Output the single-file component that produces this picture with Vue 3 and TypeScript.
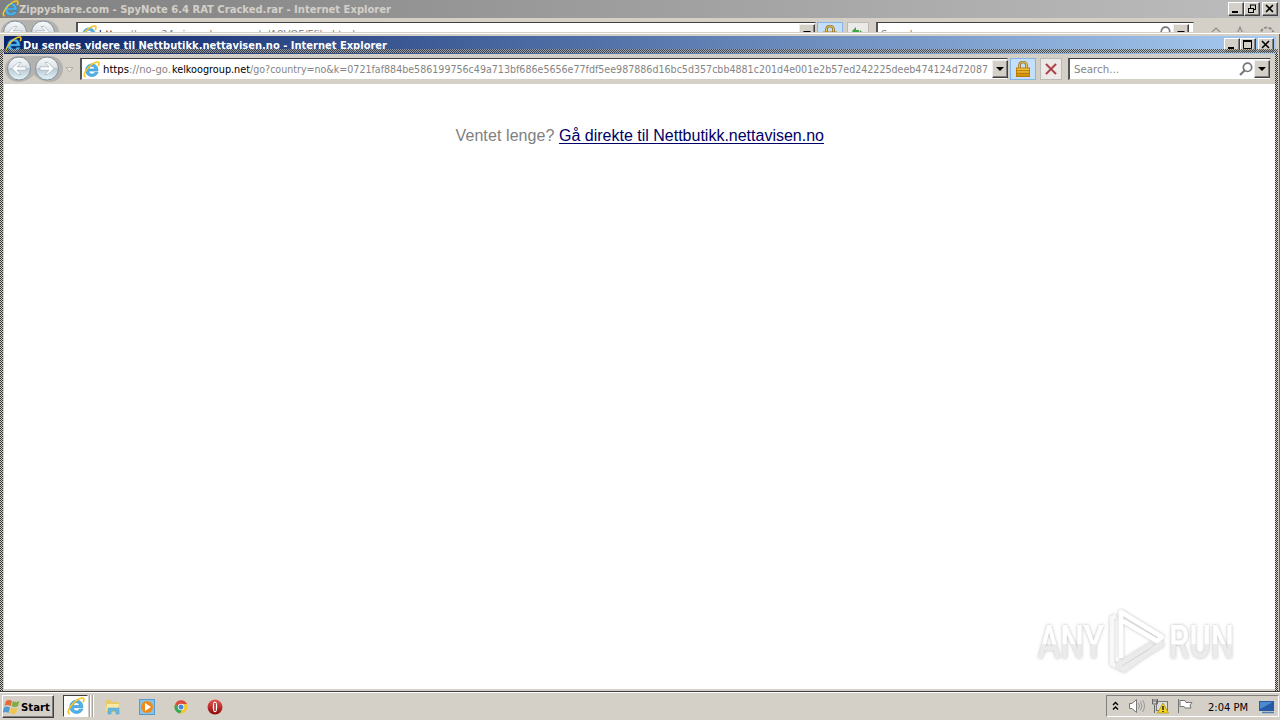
<script setup lang="ts">
const start = '://no-go.'
const path = '/go?country=no&k=0721faf884be586199756c49a713bf686e5656e77fdf5ee987886d16bc5d357cbb4881c201d4e001e2b57ed242225deeb474124d72087'
</script>

<template>
  <div class="desktop">
    <svg class="defs" width="0" height="0">
      <defs>
        <linearGradient id="round" x1="0" y1="0" x2="0" y2="1">
          <stop offset="0" stop-color="#f8fafb" /><stop offset=".48" stop-color="#dce2e7" />
          <stop offset=".5" stop-color="#b9c7d1" /><stop offset="1" stop-color="#e3f6fc" />
        </linearGradient>
        <linearGradient id="gold" x1="0" y1="0" x2="0" y2="1">
          <stop offset="0" stop-color="#f8cf50" /><stop offset="1" stop-color="#c98400" />
        </linearGradient>
        <linearGradient id="red" x1="0" y1="0" x2="0" y2="1">
          <stop offset="0" stop-color="#e55c55" /><stop offset="1" stop-color="#8d0505" />
        </linearGradient>
        <symbol id="ie" viewBox="0 0 16 16">
          <path d="M14.200 10.800C13 13.200 11 14.600 8.500 14.600 4.900 14.600 2.500 12 2.500 8.700S5 2.800 8.500 2.800s5.800 2.500 5.600 6.700H5.500c.1 1.700 1.300 2.800 3 2.800 1.200 0 2-.5 2.500-1.500zM5.600 7.500h5.500C11 6 9.900 5 8.400 5S5.800 6 5.600 7.500z" fill="#4fb4ec" stroke="#2480c0" stroke-width=".5" />
          <path d="M2.500 15C-.5 14.500 1.800 9 6.500 4.700 10.500 1 14.700-.2 15 2c.1.900-.2 1.900-.7 2.800" fill="none" stroke="#f5c526" stroke-width="1.500" />
        </symbol>
        <symbol id="nav" viewBox="0 0 58 28">
          <path d="M13 1h32a13 13 0 0 1 0 26q-9 0-16-7-7 7-16 7A13 13 0 0 1 13 1z" fill="#b3b2af" />
          <circle cx="14" cy="13.500" r="11.500" fill="url(#round)" stroke="#84909a" />
          <circle cx="42" cy="13.500" r="11.500" fill="url(#round)" stroke="#84909a" />
          <path d="M7 13.500l6-6h3l-4 4.300h9v3.400h-9l4 4.300h-3zM49 13.500l-6-6h-3l4 4.300h-9v3.400h9l-4 4.300h3z" fill="#fff" stroke="#9fadb8" stroke-width=".7" />
        </symbol>
        <symbol id="lock" viewBox="0 0 14 16">
          <path d="M3.500 8V4.500a3.500 3.500 0 0 1 7 0V8" fill="none" stroke="#896b20" stroke-width="2.600" />
          <path d="M3.500 8V4.500a3.500 3.500 0 0 1 7 0V8" fill="none" stroke="#efca63" stroke-width="1.100" />
          <rect x=".5" y="7" width="13" height="8.500" fill="url(#gold)" stroke="#bb7b05" />
          <path d="M1 9.500h12M1 12.500h12" stroke="#ad7500" stroke-width=".8" />
        </symbol>
        <symbol id="lens" viewBox="0 0 14 14">
          <circle cx="8.500" cy="5.300" r="4.200" fill="none" stroke="#77777b" stroke-width="1.700" />
          <path d="M5.500 8.500L1 13" stroke="#77777b" stroke-width="2.200" />
        </symbol>
      </defs>
    </svg>

    <section class="back">
      <header class="title gray">
        <svg class="ico" width="17" height="17"><use href="#ie" /></svg>
        <svg class="cap" width="400" height="17"><text x="0" y="13" textLength="372" lengthAdjust="spacingAndGlyphs">Zippyshare.com - SpyNote 6.4 RAT Cracked.rar - Internet Explorer</text></svg>
        <div class="wins">
          <i class="btn"><svg width="14" height="12"><path d="M3 9h6" stroke="#000" stroke-width="2" /></svg></i>
          <i class="btn"><svg width="14" height="12"><path d="M5 2h6M5.500 2v3M10.500 2v5M8 6.500h3M3 5.500h6M3.500 5v5M8.500 5v5M3 9.500h6" stroke="#000" fill="none" /></svg></i>
          <i class="btn gap"><svg width="14" height="12"><path d="M3 2l7 7M10 2L3 9" stroke="#000" stroke-width="1.600" /></svg></i>
        </div>
      </header>
      <div class="backbar">
        <svg class="bnav" width="58" height="28"><use href="#nav" /></svg>
        <div class="field baddr">
          <svg class="ico" width="17" height="17"><use href="#ie" /></svg>
          <svg class="faint" width="270" height="20"><text x="2" y="15" class="dark" textLength="26">https</text><text x="29" y="15" textLength="229" lengthAdjust="spacingAndGlyphs">://www24.zippyshare.com/v/A8VOF/Ffile.html</text></svg>
          <i class="drop"><b></b></i>
        </div>
        <i class="blue blk"><svg width="14" height="16"><use href="#lock" /></svg></i>
        <i class="sq"><svg width="16" height="14"><path d="M2 5l4-4v3h3v3H6v3zM14 8l-4-4-1 8z" fill="#42a447" /></svg></i>
        <div class="field bsearch">
          <svg class="faint" width="60" height="20"><text x="3" y="15" textLength="45">Search...</text></svg>
          <svg class="blens" width="14" height="14"><use href="#lens" /></svg><i class="drop"><b></b></i>
        </div>
        <svg class="tools" width="68" height="16" fill="none" stroke="#8d8d8d" stroke-width="1.200"><path d="M1 8l6-6 6 6v5H3V7M31 1l2 5 5 1-4 3 1 5-4-3-4 3 1-5-4-3 5-1z" /><circle cx="58" cy="8" r="6.500" stroke-dasharray="3 1.500" stroke-width="2" /></svg>
      </div>
    </section>

    <section class="front">
      <header class="title navy">
        <svg class="ico" width="17" height="17"><use href="#ie" /></svg>
        <svg class="cap" width="400" height="17"><text x="0" y="13" textLength="364" lengthAdjust="spacingAndGlyphs">Du sendes videre til Nettbutikk.nettavisen.no - Internet Explorer</text></svg>
        <div class="wins">
          <i class="btn"><svg width="14" height="12"><path d="M3 9h6" stroke="#000" stroke-width="2" /></svg></i>
          <i class="btn"><svg width="14" height="12"><path d="M2.500 2v7.500h8V2" fill="none" stroke="#000" /><path d="M2 2h9" stroke="#000" stroke-width="2" /></svg></i>
          <i class="btn gap"><svg width="14" height="12"><path d="M3 2l7 7M10 2L3 9" stroke="#000" stroke-width="1.600" /></svg></i>
        </div>
      </header>
      <nav class="bar">
        <svg class="fnav" width="58" height="28"><use href="#nav" /></svg>
        <svg class="tri" width="9" height="6"><path d="M1 .5h7L4.500 5z" fill="#e7e4de" stroke="#b1aea8" /></svg>
        <div class="field addr">
          <svg class="ico" width="17" height="17"><use href="#ie" /></svg>
          <svg class="url" width="892" height="18">
            <text x="3" y="13" textLength="26" lengthAdjust="spacingAndGlyphs" class="dark">https</text>
            <text x="29" y="13" textLength="42" lengthAdjust="spacingAndGlyphs">{{ start }}</text>
            <text x="72" y="13" textLength="78" lengthAdjust="spacingAndGlyphs" class="dark">kelkoogroup.net</text>
            <text x="150" y="13" textLength="738" lengthAdjust="spacingAndGlyphs">{{ path }}</text>
          </svg>
          <i class="drop"><b></b></i>
        </div>
        <i class="blue"><svg width="14" height="16"><use href="#lock" /></svg></i>
        <i class="sq"><svg width="14" height="14"><path d="M2 2l10 10M12 2L2 12" stroke="#c2777a" stroke-width="2.400" /><path d="M2 2l10 10M12 2L2 12" stroke="#a83a40" stroke-width="1.100" /></svg></i>
        <div class="field search">
          <svg class="url" width="60" height="18"><text x="4" y="13" textLength="45" lengthAdjust="spacingAndGlyphs">Search...</text></svg>
          <svg class="flens" width="14" height="14"><use href="#lens" /></svg><i class="drop"><b></b></i>
        </div>
      </nav>
      <main class="page">
        <svg class="msg" width="370" height="24"><text x="0.500" y="17" fill="#808080" textLength="99">Ventet lenge?</text><text x="104" y="17" fill="#000066" textLength="265">Gå direkte til Nettbutikk.nettavisen.no</text><path d="M104 19.500h265" stroke="#000066" /></svg>
        <svg class="mark" width="210" height="74" viewBox="0 0 210 74">
          <defs>
            <filter id="soft" x="-10%" y="-10%" width="120%" height="130%"><feDropShadow dx="0" dy="0" stdDeviation="1.700" flood-color="#666" flood-opacity=".5" /></filter>
            <linearGradient id="half" x1="0" y1="12" x2="0" y2="56" gradientUnits="userSpaceOnUse"><stop offset="0" stop-color="#fff" /><stop offset=".54" stop-color="#fff" /><stop offset=".56" stop-color="#ebebeb" /><stop offset="1" stop-color="#ebebeb" /></linearGradient>
          </defs>
          <g filter="url(#soft)">
            <g fill="url(#half)" class="logo"><text x="8" y="50" textLength="66" lengthAdjust="spacingAndGlyphs">ANY</text><text x="139" y="50" textLength="65" lengthAdjust="spacingAndGlyphs">RUN</text></g>
            <g fill="none" stroke-width="4.500" stroke-linejoin="round"><path d="M86 8l-4 2v46l4 2" stroke="#f8f8f8" /><path d="M133 36l-41 25-5-3 35-22M133 34L94 62l-5-3" stroke="#ebebeb" /><path d="M91 50V4l41 25-5 4-34-20" stroke="#fff" /></g>
          </g>
        </svg>
      </main>
      <i class="dither top"></i><i class="dither left"></i><i class="dither right"></i>
    </section>

    <footer class="taskbar">
      <div class="start">
        <svg width="18" height="18" viewBox="0 0 18 18"><path d="M3 3q3-2 6 0L7.500 8q-3-2-6 0z" fill="#e56835" /><path d="M10 3q3 2 6.500 0L15 8q-3 2-6.500 0z" fill="#80ad43" /><path d="M1 9.500q3-2 6 0L5.500 15q-3-2-6 0z" fill="#539bcc" /><path d="M8 9.500q3 2 6.500 0L13 15q-3 2-6.500 0z" fill="#edc64b" /></svg>
        <svg class="st" width="31" height="16"><text x="0" y="12" textLength="29" lengthAdjust="spacingAndGlyphs">Start</text></svg>
      </div>
      <div class="active"><svg width="18" height="18"><use href="#ie" /></svg></div><i class="stack"></i><i class="stack"></i>
      <div class="quick">
        <svg width="16" height="16"><path d="M1 3V1h5l1 2h7v10H1z" fill="#e9ca68" /><path d="M2 5h12l-1 7H1z" fill="#f8e9a6" /><path d="M3 15V9h11v6h-3v-3H6v3z" fill="#69b8dc" stroke="#4d9fc7" stroke-width=".5" /></svg>
        <svg width="16" height="16"><rect x=".5" y=".5" width="15" height="15" fill="#8ac3e9" stroke="#579bcc" /><circle cx="8" cy="8" r="6" fill="#ef8b18" /><path d="M6 4l6 4-6 4z" fill="#fff" /></svg>
        <svg width="16" height="16" viewBox="0 0 16 16"><circle cx="8" cy="8" r="6.500" fill="#f4c72f" /><path d="M2.400 4.700A6.500 6.500 0 0 1 14 5H8L5 9z" fill="#dc493d" /><path d="M2.400 4.700L6 10.500l3 .5-2 3.500A6.500 6.500 0 0 1 2.400 4.700z" fill="#37a85b" /><circle cx="8" cy="8" r="3.200" fill="#fff" /><circle cx="8" cy="8" r="2.500" fill="#4686da" /></svg>
        <svg width="16" height="16"><circle cx="8" cy="8" r="7.500" fill="url(#red)" /><ellipse cx="8" cy="8" rx="2.200" ry="5.300" fill="#fff" /><path d="M8 4v8" stroke="#a51a1a" stroke-width="1.500" /></svg>
      </div>
      <div class="tray">
        <svg class="chev" width="8" height="10" fill="none" stroke="#000" stroke-width="1.400"><path d="M1 4l2.500-2.500L6 4M1 8.500L3.500 6 6 8.500" /></svg>
        <svg class="sound" width="18" height="16" fill="none"><path d="M1.500 5.500H4L8.500 1.500v13L4 10.500H1.500z" fill="#fff" stroke="#777" /><path d="M10.500 5q2 3 0 6M12.500 3.500q3 4.500 0 9M14.500 2q4 6 0 12" stroke="#999" /></svg>
        <svg class="net" width="18" height="16"><rect x="4.500" y="3.500" width="11" height="9" fill="#ddd" stroke="#777" /><path d="M2.500 15V7M.5 1v5h5V1M2 1v3M4 1v3" fill="none" stroke="#666" /><path d="M11 5l5.500 10h-11z" fill="#f6d51f" stroke="#ad9000" stroke-width=".7" /><path d="M11 8v4M11 13v1" stroke="#222" stroke-width="1.500" /></svg>
        <svg class="flag" width="17" height="16"><path d="M1.500 1v14M3 2.500h5l1 2h6l-2 2.500 1 3H8l-1-1.500H3z" fill="#fff" stroke="#777" /></svg>
        <svg class="clock" width="42" height="16"><text x="0" y="13" textLength="40" lengthAdjust="spacingAndGlyphs">2:04 PM</text></svg>
        <svg class="desk" width="16" height="15"><path d="M0 2h15v10H0z" fill="#235ba8" /><path d="M1 3h13L1 10z" fill="#4e89ce" /><path d="M3 13.500h12" stroke="#527db1" stroke-width="1.500" /></svg>
      </div>
    </footer>
  </div>
</template>

<style>
html, body { margin: 0; overflow: hidden; }
</style>
<style scoped>
* { box-sizing: border-box; }
svg, i { display: block; flex: none; }
.defs { position: absolute; }
.desktop { width: 1280px; height: 720px; overflow: hidden; position: relative; background: #d4d0c8; display: flex; flex-direction: column; font-family: "DejaVu Sans Condensed", "DejaVu Sans", sans-serif; }
.back { height: 32px; overflow: hidden; }
.title { display: flex; align-items: flex-start; }
.gray { height: 18px; background: linear-gradient(90deg, #808080, #bdbdbd); padding-left: 2px; }
.cap { margin-left: 1px; font: bold 11px "DejaVu Sans Condensed", sans-serif; fill: #d4d0c8; }
.gray .cap { margin-left: 0; }
.wins { margin-left: auto; display: flex; padding: 2px 2px 0 0; }
.btn { width: 16px; height: 14px; background: #d4d0c8; border: 1px solid; border-color: #fff #404040 #404040 #fff; box-shadow: inset -1px -1px #808080; }
.gap { margin-left: 2px; }
.backbar { height: 32px; padding-top: 4px; display: flex; align-items: flex-start; }
.bnav { margin: -3px 0 0 1px; }
.field { background: #fff; border: 1px solid #777; border-top: 1px solid #404040; border-left: 2px solid #555; border-right-color: #d4d0c8; border-bottom-color: #d4d0c8; height: 22px; display: flex; align-items: center; }
.baddr { width: 740px; margin-left: 17px; }
.baddr .ico { margin-left: 2px; }
.faint, .url { font-size: 11px; fill: #858585; }
.dark { fill: #000; }
.drop { width: 16px; height: 18px; margin-left: auto; background: #d4d0c8; border: 1px solid; border-color: #eee #404040 #404040 #eee; box-shadow: inset -1px -1px #808080; display: flex; justify-content: center; align-items: center; }
.drop b { border: 4px solid transparent; border-top-color: #000; border-bottom: 0; }
.blue, .sq { width: 26px; height: 22px; background: #c4dff9; border: 1px solid #86b5e5; display: flex; justify-content: center; align-items: center; }
.sq { width: 22px; background: #eceae6; border-color: #bdbab5; }
.blk { margin-left: 1px; }
.backbar .sq { margin-left: 4px; }
.bsearch { width: 318px; margin-left: 7px; }
.blens { margin-left: auto; margin-right: 2px; }
.bsearch .drop { margin-left: 0; margin-right: 4px; }
.tools { margin: 4px 0 0 15px; }
.front { position: relative; height: 660px; background: #d4d0c8; border-top: 1px solid #d4d0c8; box-shadow: inset 0 1px #fff, inset -1px 0 #606060; padding-top: 3px; border-bottom: 1px solid #404040; }
.navy { height: 18px; margin: 0 4px; background: linear-gradient(90deg, #0a246a, #a6caf0); padding-left: 1px; }
.navy .cap { fill: #fff; }
.navy .wins { padding-right: 2px; }
.bar { height: 30px; padding-top: 4px; display: flex; }
.fnav { margin: -3px 0 0 5px; }
.tri { margin: 9px 0 0 2px; }
.addr { width: 928px; margin-left: 6px; }
.addr .ico { margin-left: 1px; }
.bar .blue { margin-left: 2px; }
.bar .sq { margin-left: 4px; }
.search { width: 203px; margin-left: 6px; }
.flens { margin-left: auto; margin-right: 1px; }
.search .drop { margin-left: 0; }
.page { height: 605px; margin: 0 5px 0 4px; background: #fff; position: relative; padding-top: 40px; }
.msg { margin: 0 auto; font: 16px "Liberation Sans", sans-serif; }
.mark { position: absolute; left: 1026px; top: 524px; }
.logo { font: 500 46px "Roboto", sans-serif; }
.dither { position: absolute; background: repeating-conic-gradient(#303030 0 25%, #d4d0c8 0 50%) 0 0 / 2px 2px; }
.top { left: 0; right: 2px; top: 16px; height: 4px; background: repeating-conic-gradient(rgba(64, 64, 64, .85) 0 25%, rgba(190, 190, 180, .65) 0 50%) 0 0 / 2px 2px; }
.left { left: 0; top: 20px; bottom: 0; width: 3px; }
.right { right: 2px; top: 20px; bottom: 0; width: 3px; }
.taskbar { height: 28px; background: #d4d0c8; border-top: 1px solid #fff; display: flex; align-items: flex-start; padding: 2px 1px 0 2px; }
.start { width: 52px; height: 23px; border: 1px solid; border-color: #fff #404040 #404040 #fff; box-shadow: inset -1px -1px #808080; display: flex; align-items: center; }
.st { font: bold 11px "DejaVu Sans Condensed", sans-serif; }
.active { width: 25px; height: 22px; margin-left: 9px; background: #fff; border: 1px solid; border-color: #404040 #fff #fff #404040; display: flex; justify-content: center; align-items: center; }
.stack { width: 2px; height: 22px; margin-left: 1px; background: #fff; border-left: 1px solid #a8a49e; }
.quick { display: flex; gap: 18px; margin: 4px 0 0 11px; }
.tray { width: 173px; height: 22px; margin-left: auto; border: 1px solid; border-color: #808080 #fff #fff #808080; display: flex; align-items: center; font-size: 11px; }
.chev { margin-left: 5px; }
.sound { margin-left: 8px; }
.net { margin-left: 6px; }
.flag { margin-left: 7px; }
.clock { margin-left: 14px; }
.desk { margin-left: 9px; }
</style>
